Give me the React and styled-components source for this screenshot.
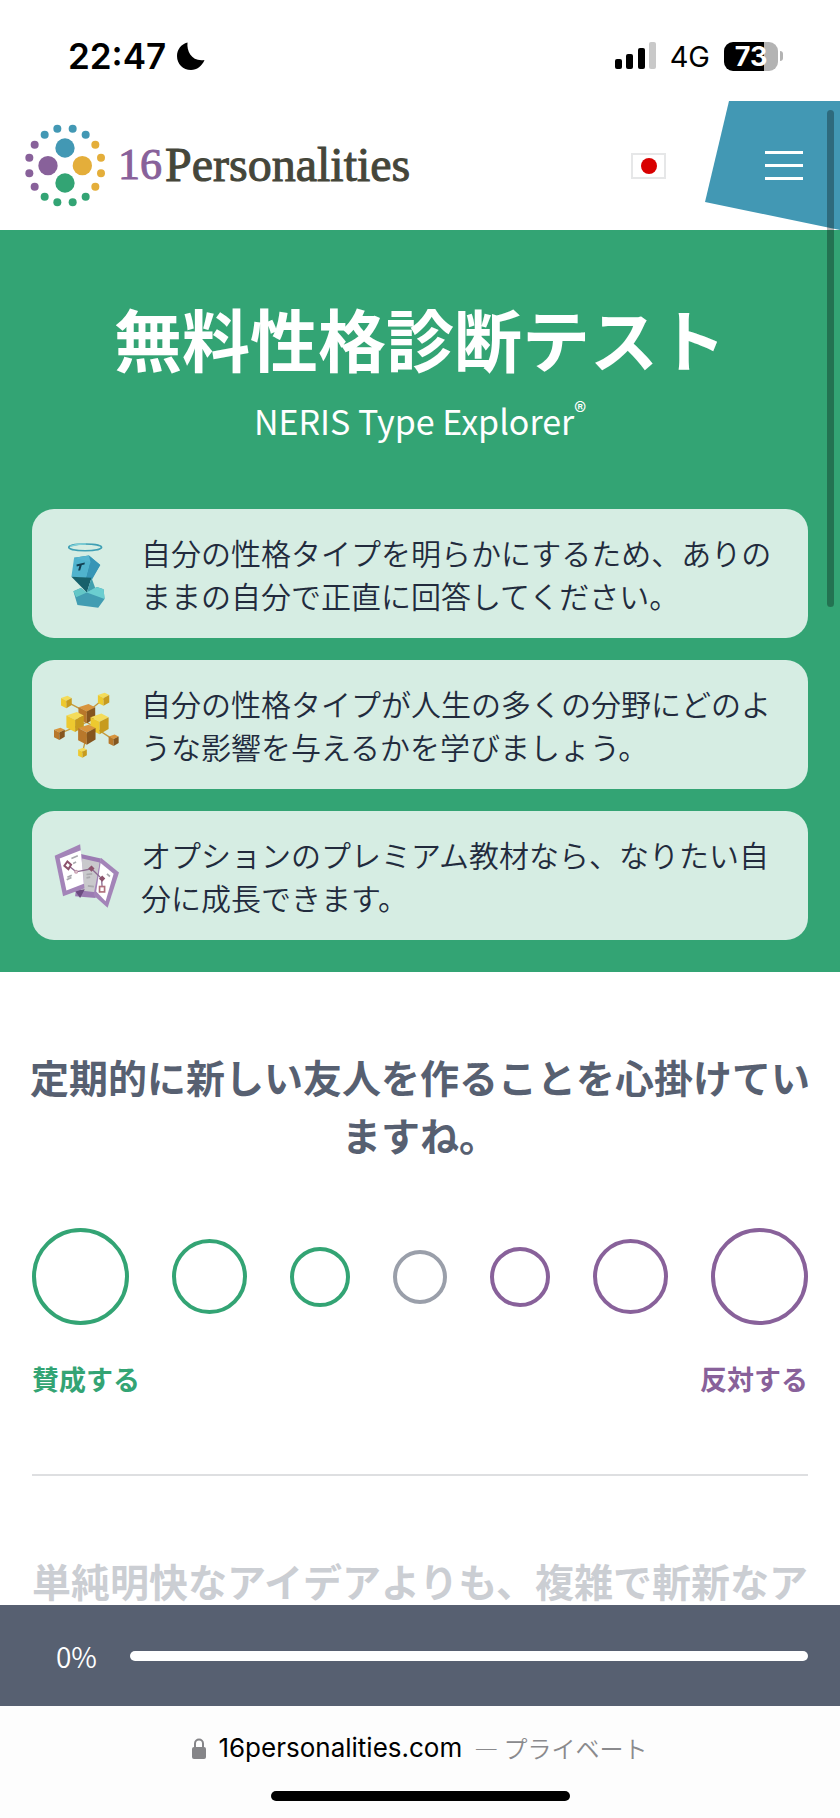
import React from "react";
import styled, { createGlobalStyle } from "styled-components";

const GlobalStyle = createGlobalStyle`
  *, *::before, *::after { box-sizing: border-box; }
  body { margin: 0; background: #fff; }
`;

const color = {
  green: "#33a474",
  purple: "#88619a",
  blue: "#4298b4",
  gold: "#e4ae3a",
  slate: "#576071",
  gray: "#9a9faa",
};

const Screen = styled.div`
  position: relative;
  display: flex;
  flex-direction: column;
  height: 100vh;
  overflow: hidden;
  background: #fff;
  font-family: "Noto Sans CJK JP", sans-serif;
`;

const StatusBar = styled.div`
  flex: none;
  display: flex;
  align-items: center;
  justify-content: space-between;
  height: 101px;
  padding: 11px 57px 0 68px;
  color: #000;
  font-family: Inter, sans-serif;
`;

const StatusGroup = styled.div`
  display: flex;
  align-items: center;
  gap: ${(p) => p.$gap}px;
`;

const Clock = styled.time`
  font-size: 35px;
  font-weight: 600;
`;

const Network = styled.span`
  font-size: 29px;
`;

const Battery = styled.div`
  position: relative;
  display: flex;
  align-items: center;
  justify-content: center;
  width: 54px;
  height: 29px;
  margin-right: 5px;
  border-radius: 9px;
  background: linear-gradient(to right, #000 74%, #b3b3b3 74%);
  color: #fff;
  font-size: 27px;
  font-weight: 700;

  &::after {
    content: "";
    position: absolute;
    right: -5px;
    width: 3px;
    height: 10px;
    border-radius: 0 3px 3px 0;
    background: #b3b3b3;
  }
`;

const Header = styled.header`
  flex: none;
  display: flex;
  align-items: stretch;
  height: 129px;
`;

const Brand = styled.a`
  display: flex;
  align-items: center;
  flex: 1;
  padding: 0 0 2px 20px;
  color: #45463a;
  font-family: "Liberation Serif", serif;
  font-size: 48px;
  -webkit-text-stroke: 1px currentColor;
  text-decoration: none;
`;

const BrandNumber = styled.span`
  margin: 0 3px 0 8px;
  color: ${color.purple};
  font-size: 44px;
`;

const FlagButton = styled.button`
  align-self: center;
  display: grid;
  place-items: center;
  width: 35px;
  height: 26px;
  margin-right: 39px;
  padding: 0;
  border: 2px solid #e6e7e8;
  background: #fff;

  &::before {
    content: "";
    width: 16px;
    height: 16px;
    border-radius: 50%;
    background: #d80000;
  }
`;

const MenuButton = styled.button`
  display: flex;
  flex-direction: column;
  justify-content: center;
  gap: 10px;
  width: 135px;
  padding: 0 37px 0 60px;
  border: 0;
  background: ${color.blue};
  clip-path: polygon(24px 0, 100% 0, 100% 100%, 0 101px);
`;

const MenuLine = styled.span`
  height: 3px;
  background: #fff;
`;

const Content = styled.main`
  flex: 1;
  min-height: 0;
  overflow: hidden;
`;

const Hero = styled.section`
  padding: 58px 32px 32px;
  background: ${color.green};
  color: #fff;
  text-align: center;
`;

const Title = styled.h1`
  margin: 0;
  font-size: 68px;
  font-weight: 700;
  line-height: 100px;
`;

const Subtitle = styled.p`
  margin: 9px 0 64px;
  font-size: 34px;
  line-height: 48px;

  sup {
    font-size: 25px;
    line-height: 0;
    vertical-align: 14px;
  }
`;

const CardList = styled.ul`
  display: flex;
  flex-direction: column;
  gap: 22px;
  margin: 0;
  padding: 0;
  list-style: none;
`;

const Card = styled.li`
  display: flex;
  align-items: center;
  gap: 20px;
  padding: 22px 32px 21px 22px;
  border-radius: 22px;
  background: #d6ede3;
  color: #222b3d;
  font-size: 30px;
  font-weight: 350;
  line-height: 43px;
  text-align: left;

  svg { flex: none; }
`;

const Questions = styled.section`
  padding: 75px 32px 0;
`;

const Question = styled.fieldset`
  margin: 0;
  padding: 0;
  border: 0;
  min-width: 0;
  opacity: ${(p) => (p.$inactive ? 0.3 : 1)};
`;

const Prompt = styled.legend`
  width: calc(100% + 4px);
  margin: 0 -2px;
  padding: 0;
  color: ${color.slate};
  font-size: 39px;
  font-weight: 700;
  line-height: 58px;
  text-align: center;
`;

const Scale = styled.div`
  display: flex;
  align-items: center;
  justify-content: space-between;
  margin-top: 65px;
`;

const Choice = styled.input`
  appearance: none;
  width: ${(p) => p.$size}px;
  height: ${(p) => p.$size}px;
  margin: 0;
  border: 4px solid ${(p) => p.$color};
  border-radius: 50%;
  background: #fff;

  &:checked { background: ${(p) => p.$color}; }
`;

const Captions = styled.div`
  display: flex;
  justify-content: space-between;
  margin-top: 34px;
  font-size: 27px;
  font-weight: 700;
  line-height: 40px;
`;

const Caption = styled.span`
  color: ${(p) => p.$color};
`;

const Divider = styled.hr`
  height: 2px;
  margin: 75px 0;
  border: 0;
  background: #dedfe1;
`;

const ProgressBar = styled.div`
  flex: none;
  display: flex;
  align-items: center;
  gap: 33px;
  height: 101px;
  padding: 0 32px 0 56px;
  background: ${color.slate};
  color: #fff;
  font-size: 28px;
  font-weight: 350;
`;

const Track = styled.div`
  flex: 1;
  height: 10px;
  border-radius: 5px;
  background: #fff;
`;

const BrowserBar = styled.footer`
  flex: none;
  display: flex;
  flex-direction: column;
  align-items: center;
  justify-content: space-between;
  height: 112px;
  padding: 24px 0 17px;
  background: #fdfdfd;
`;

const Address = styled.div`
  display: flex;
  align-items: center;
  gap: 12px;
  color: #8a8a8d;
  font-family: Inter, "Noto Sans CJK JP", sans-serif;
  font-size: 24px;
  font-weight: 350;
  line-height: 36px;
`;

const Domain = styled.span`
  color: #000;
  font-size: 26px;
  font-weight: 400;
`;

const Mode = styled.span`
  font-family: "Noto Sans CJK JP", sans-serif;
`;

const HomeIndicator = styled.div`
  width: 299px;
  height: 10px;
  border-radius: 5px;
  background: #000;
`;

const ScrollThumb = styled.div`
  position: absolute;
  top: 110px;
  right: 6px;
  width: 7px;
  height: 497px;
  border-radius: 4px;
  background: rgba(0, 0, 0, 0.3);
`;

const Moon = () => (
  <svg width="28" height="28" viewBox="0 0 28 28" aria-hidden="true">
    <path d="M10.500 0.500C9.500 9.500 15 20 27.500 18C25 24 20 28 14 28C6 28 0 22 0 14C0 8 4 2 10.500 .5Z" fill="#000" />
  </svg>
);

const Signal = () => (
  <svg width="41" height="28" viewBox="0 0 41 28" aria-hidden="true">
    <rect x="0" y="17" width="7" height="10" rx="2" />
    <rect x="11" y="12" width="7" height="15" rx="2" />
    <rect x="23" y="6" width="7" height="21" rx="2" />
    <rect x="34" y="0" width="7" height="27" rx="2" fill="#c9c9c9" />
  </svg>
);

const dots = [
  [112, 41, color.blue], [158, 41, color.blue], [74, 59, color.blue], [197, 59, color.blue],
  [44, 89, color.purple], [28, 128, color.purple], [28, 175, color.purple], [44, 215, color.purple],
  [226, 89, color.gold], [243, 128, color.gold], [243, 175, color.gold], [226, 215, color.gold],
  [74, 245, color.green], [112, 262, color.green], [158, 262, color.green], [197, 245, color.green],
];

const Emblem = () => (
  <svg width="90" height="100" viewBox="0 0 270 300" aria-hidden="true">
    {dots.map(([x, y, fill]) => <circle key={`${x}-${y}`} cx={x} cy={y} r="12" fill={fill} />)}
    <circle cx="135" cy="99" r="29" fill={color.blue} />
    <circle cx="84" cy="152" r="29" fill={color.purple} />
    <circle cx="187" cy="152" r="29" fill={color.gold} />
    <circle cx="135" cy="204" r="29" fill={color.green} />
  </svg>
);

const FigureIcon = () => (
  <svg width="67" height="67" viewBox="0 0 200 200" aria-hidden="true">
    <ellipse cx="93" cy="19" rx="49" ry="10" fill="none" stroke="#3f9fb4" strokeWidth="5" />
    <path d="M48 16Q70 8 95 9" fill="none" stroke="#7fd0d8" strokeWidth="4" />
    <path d="M60 50L104 43L138 72L112 113L94 112Z" fill="#2f8ca8" />
    <path d="M60 50L104 43L138 72L109 68Z" fill="#57b6d0" />
    <path d="M60 50L109 63L96 112L52 107Z" fill="#50b3cd" />
    <path d="M109 63L104 43L138 72L112 118L96 112Z" fill="#3795b6" />
    <path d="M67 70L92 64L91 70L83 72L78 88L72 88L76 74L68 76Z" fill="#123f52" />
    <path d="M52 107L112 110L98 154Z" fill="#17616b" />
    <path d="M112 110L123 140L98 154Z" fill="#409fae" />
    <path d="M58 150L80 140L98 154L128 137L148 144L151 173L132 199L70 191Z" fill="#429db2" />
    <path d="M58 150L80 140L98 154L66 168Z" fill="#64c7c7" />
    <path d="M128 137L148 144L151 173L98 154Z" fill="#6bced0" />
  </svg>
);

const Cube = ({ x, y, s, tone }) => {
  const t = tone === "gold" ? ["#f4dc5a", "#edc92f", "#c79b1e"] : ["#d8943d", "#b8782b", "#85561f"];
  return (
    <g transform={`translate(${x} ${y}) scale(${s})`}>
      <path d="M-10-7L2-11L10-7L0-2Z" fill={t[0]} />
      <path d="M-10-7L0-2L0 12L-10 7Z" fill={t[1]} />
      <path d="M0-2L10-7L10 6L0 12Z" fill={t[2]} />
    </g>
  );
};

const NetworkIcon = () => (
  <svg width="67" height="67" viewBox="0 0 200 200" overflow="visible" aria-hidden="true">
    <path d="M37 29L98 61L148 21M16 124L98 90L178 143M85 181L98 126" fill="none" stroke="#c49a3d" strokeWidth="4" />
    <Cube x={37} y={29} s={1.6} tone="gold" />
    <Cube x={148} y={21} s={1.7} tone="gold" />
    <Cube x={98} y={63} s={2.5} tone="brown" />
    <Cube x={63} y={88} s={2.6} tone="gold" />
    <Cube x={136} y={94} s={2.7} tone="gold" />
    <Cube x={98} y={126} s={2.6} tone="brown" />
    <Cube x={16} y={124} s={1.6} tone="brown" />
    <Cube x={178} y={143} s={1.5} tone="brown" />
    <Cube x={85} y={181} s={1.3} tone="gold" />
  </svg>
);

const MapIcon = () => (
  <svg width="67" height="67" viewBox="0 0 200 200" aria-hidden="true">
    <path d="M80 33L140 46L124 164L63 159Z" fill="#9b7bb2" />
    <path d="M84 46L136 58L124 147L80 142Z" fill="#c9c9cc" />
    <path d="M63 143L92 138L78 164Z" fill="#6b4b80" />
    <path d="M2 38L78 4L91 135L27 159Z" fill="#a384b8" />
    <path d="M17 46L80 22L89 122L37 142Z" fill="#fff" />
    <path d="M140 44L194 88L160 193L118 156Z" fill="#a384b8" />
    <path d="M139 60L178 92L154 174L126 145Z" fill="#fff" />
    <path d="M40 65L66 86L112 77L142 106L144 138" fill="none" stroke="#8d6a91" strokeWidth="4" />
    <path d="M40 55L51 65L43 78L31 68Z" fill="#fff" stroke="#8d536c" strokeWidth="6" />
    <path d="M112 67L121 76L112 86L102 76ZM144 97L153 106L144 116L134 107Z" fill="#8d536c" />
    <circle cx="66" cy="86" r="4" fill="#fff" stroke="#c49aad" strokeWidth="4" />
    <rect x="136" y="130" width="15" height="16" fill="#fff" stroke="#b0707d" strokeWidth="5" />
    <path d="M52 46L71 38M57 61L66 57M40 102L53 96M38 110L52 103M97 94L114 92M97 104L108 102M101 128L119 130M158 92L167 100" stroke="#a9a9ad" strokeWidth="5" />
  </svg>
);

const Lock = () => (
  <svg width="14" height="21" viewBox="0 0 14 21" aria-hidden="true">
    <path d="M3 10V5.500a4 4 0 0 1 8 0V10" fill="none" stroke="#858588" strokeWidth="2" />
    <rect x="0" y="9" width="14" height="12" rx="2" fill="#858588" />
  </svg>
);

const features = [
  { Icon: FigureIcon, text: "自分の性格タイプを明らかにするため、ありのままの自分で正直に回答してください。" },
  { Icon: NetworkIcon, text: "自分の性格タイプが人生の多くの分野にどのような影響を与えるかを学びましょう。" },
  { Icon: MapIcon, text: "オプションのプレミアム教材なら、なりたい自分に成長できます。" },
];

const choices = [
  { size: 97, color: color.green, label: "強く賛成する" },
  { size: 75, color: color.green, label: "賛成する" },
  { size: 60, color: color.green, label: "やや賛成する" },
  { size: 54, color: color.gray, label: "どちらでもない" },
  { size: 60, color: color.purple, label: "やや反対する" },
  { size: 75, color: color.purple, label: "反対する" },
  { size: 97, color: color.purple, label: "強く反対する" },
];

export default function App() {
  return (
    <Screen lang="ja">
      <GlobalStyle />
      <StatusBar>
        <StatusGroup $gap={11}>
          <Clock>22:47</Clock>
          <Moon />
        </StatusGroup>
        <StatusGroup $gap={14}>
          <Signal />
          <Network>4G</Network>
          <Battery>73</Battery>
        </StatusGroup>
      </StatusBar>
      <Header>
        <Brand href="#">
          <Emblem />
          <BrandNumber>16</BrandNumber>
          <span>Personalities</span>
        </Brand>
        <FlagButton aria-label="言語" />
        <MenuButton aria-label="メニュー">
          <MenuLine />
          <MenuLine />
          <MenuLine />
        </MenuButton>
      </Header>
      <Content>
        <Hero>
          <Title>無料性格診断テスト</Title>
          <Subtitle>NERIS Type Explorer<sup>®</sup></Subtitle>
          <CardList>
            {features.map(({ Icon, text }) => (
              <Card key={text}>
                <Icon />
                <span>{text}</span>
              </Card>
            ))}
          </CardList>
        </Hero>
        <Questions>
          <Question>
            <Prompt>定期的に新しい友人を作ることを心掛けていますね。</Prompt>
            <Scale>
              {choices.map((c) => (
                <Choice key={c.label} type="radio" name="q1" aria-label={c.label} $size={c.size} $color={c.color} />
              ))}
            </Scale>
            <Captions>
              <Caption $color={color.green}>賛成する</Caption>
              <Caption $color={color.purple}>反対する</Caption>
            </Captions>
          </Question>
          <Divider />
          <Question $inactive>
            <Prompt>単純明快なアイデアよりも、複雑で斬新なア</Prompt>
          </Question>
        </Questions>
      </Content>
      <ProgressBar>
        <span>0%</span>
        <Track role="progressbar" aria-label="進捗" aria-valuenow={0} aria-valuemin={0} aria-valuemax={100} />
      </ProgressBar>
      <BrowserBar>
        <Address>
          <Lock />
          <Domain>16personalities.com</Domain>
          <Mode>— プライベート</Mode>
        </Address>
        <HomeIndicator />
      </BrowserBar>
      <ScrollThumb />
    </Screen>
  );
}
